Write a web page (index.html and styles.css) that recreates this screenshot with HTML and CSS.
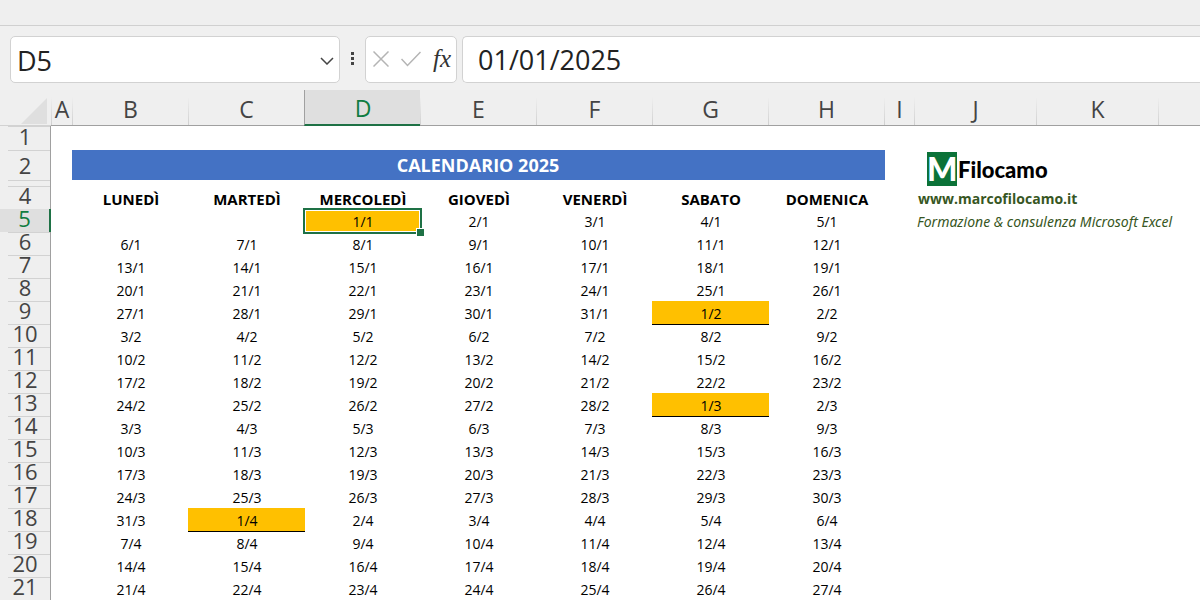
FILE: index.html
```html
<!DOCTYPE html>
<html lang="it">
<head>
<meta charset="utf-8">
<title>Calendario 2025</title>
<link rel="stylesheet" href="styles.css">
</head>
<body>
<div class="ribbon-edge"></div>
<div class="formula-bar">
  <div class="name-box">
    <input class="name-input" type="text" value="D5" aria-label="Casella nome">
    <button class="icon-btn" type="button" aria-label="Apri elenco nomi">
      <svg width="14" height="8" viewBox="0 0 14 8"><path d="M1 1l6 6 6-6" fill="none" stroke="#444" stroke-width="1.5"/></svg>
    </button>
  </div>
  <svg class="grip" width="4" height="14" viewBox="0 0 4 14"><path d="M0 0h3v3H0zM0 5h3v3H0zM0 10h3v3H0z" fill="#444"/></svg>
  <div class="actions">
    <button class="icon-btn" type="button" aria-label="Annulla">
      <svg width="16" height="16" viewBox="0 0 16 16"><path d="M.5.5l15 15M15.500.5l-15 15" fill="none" stroke="#b4b4b4" stroke-width="1.500"/></svg>
    </button>
    <button class="icon-btn" type="button" aria-label="Invio">
      <svg width="20" height="16" viewBox="0 0 20 16"><path d="M.5 8l6 6.500L19.500 1" fill="none" stroke="#b4b4b4" stroke-width="1.500"/></svg>
    </button>
    <button class="icon-btn fx" type="button" aria-label="Inserisci funzione">fx</button>
  </div>
  <input class="formula-input" type="text" value="01/01/2025" aria-label="Barra della formula">
</div>
<table class="sheet">
<colgroup><col class="c-head"><col class="c-a"><col class="c-day"><col class="c-day"><col class="c-day"><col class="c-day"><col class="c-day"><col class="c-day"><col class="c-day"><col class="c-i"><col class="c-wide"><col class="c-wide"><col></colgroup>
<thead>
<tr class="letters"><th class="corner"><svg width="26" height="26" viewBox="0 0 26 26"><path d="M26 0v26H0z" fill="#dfdfdf"/></svg></th><th>A</th><th>B</th><th>C</th><th class="active">D</th><th>E</th><th>F</th><th>G</th><th>H</th><th>I</th><th>J</th><th>K</th><th></th></tr>
</thead>
<tbody>
<tr class="r1"><th>1</th><td colspan="12"></td></tr>
<tr class="r2"><th>2</th><td></td><td class="title" colspan="7">CALENDARIO 2025</td><td></td><td class="brand" colspan="3" rowspan="2"><div class="logo"><span class="logo-m">M</span><span class="logo-name">Filocamo</span></div></td></tr>
<tr class="r3"><th></th><td colspan="9"></td></tr>
<tr class="days"><th>4</th><td></td><td>LUNEDÌ</td><td>MARTEDÌ</td><td>MERCOLEDÌ</td><td>GIOVEDÌ</td><td>VENERDÌ</td><td>SABATO</td><td>DOMENICA</td><td></td><td class="note" colspan="3"><a class="site" href="#">www.marcofilocamo.it</a></td></tr>
<tr><th class="active">5</th><td></td><td></td><td></td><td class="first selected">1/1</td><td>2/1</td><td>3/1</td><td>4/1</td><td>5/1</td><td></td><td class="note tagline" colspan="3">Formazione &amp; consulenza Microsoft Excel</td></tr>
<tr><th>6</th><td></td><td>6/1</td><td>7/1</td><td>8/1</td><td>9/1</td><td>10/1</td><td>11/1</td><td>12/1</td></tr>
<tr><th>7</th><td></td><td>13/1</td><td>14/1</td><td>15/1</td><td>16/1</td><td>17/1</td><td>18/1</td><td>19/1</td></tr>
<tr><th>8</th><td></td><td>20/1</td><td>21/1</td><td>22/1</td><td>23/1</td><td>24/1</td><td>25/1</td><td>26/1</td></tr>
<tr><th>9</th><td></td><td>27/1</td><td>28/1</td><td>29/1</td><td>30/1</td><td>31/1</td><td class="first">1/2</td><td>2/2</td></tr>
<tr><th>10</th><td></td><td>3/2</td><td>4/2</td><td>5/2</td><td>6/2</td><td>7/2</td><td>8/2</td><td>9/2</td></tr>
<tr><th>11</th><td></td><td>10/2</td><td>11/2</td><td>12/2</td><td>13/2</td><td>14/2</td><td>15/2</td><td>16/2</td></tr>
<tr><th>12</th><td></td><td>17/2</td><td>18/2</td><td>19/2</td><td>20/2</td><td>21/2</td><td>22/2</td><td>23/2</td></tr>
<tr><th>13</th><td></td><td>24/2</td><td>25/2</td><td>26/2</td><td>27/2</td><td>28/2</td><td class="first">1/3</td><td>2/3</td></tr>
<tr><th>14</th><td></td><td>3/3</td><td>4/3</td><td>5/3</td><td>6/3</td><td>7/3</td><td>8/3</td><td>9/3</td></tr>
<tr><th>15</th><td></td><td>10/3</td><td>11/3</td><td>12/3</td><td>13/3</td><td>14/3</td><td>15/3</td><td>16/3</td></tr>
<tr><th>16</th><td></td><td>17/3</td><td>18/3</td><td>19/3</td><td>20/3</td><td>21/3</td><td>22/3</td><td>23/3</td></tr>
<tr><th>17</th><td></td><td>24/3</td><td>25/3</td><td>26/3</td><td>27/3</td><td>28/3</td><td>29/3</td><td>30/3</td></tr>
<tr><th>18</th><td></td><td>31/3</td><td class="first">1/4</td><td>2/4</td><td>3/4</td><td>4/4</td><td>5/4</td><td>6/4</td></tr>
<tr><th>19</th><td></td><td>7/4</td><td>8/4</td><td>9/4</td><td>10/4</td><td>11/4</td><td>12/4</td><td>13/4</td></tr>
<tr><th>20</th><td></td><td>14/4</td><td>15/4</td><td>16/4</td><td>17/4</td><td>18/4</td><td>19/4</td><td>20/4</td></tr>
<tr><th>21</th><td></td><td>21/4</td><td>22/4</td><td>23/4</td><td>24/4</td><td>25/4</td><td>26/4</td><td>27/4</td></tr>
</tbody>
</table>
</body>
</html>
```
FILE: styles.css
```css
* { box-sizing: border-box; }
body {
  margin: 0;
  background: #efefef;
  color: #000;
  font-family: "Open Sans", "Noto Sans", sans-serif;
}
.ribbon-edge { height: 26px; border-bottom: 1px solid #d0d0d0; }

.formula-bar {
  display: flex;
  align-items: center;
  height: 64px;
  padding: 2px 0 0 10px;
  background: #f0f0f0;
}
.name-box, .actions, .formula-input {
  height: 47px;
  background: #fff;
  border: 1px solid #d2d2d2;
  border-radius: 5px;
}
.name-box { display: flex; align-items: center; width: 330px; padding-right: 4px; }
.name-input, .formula-input { font: 27px "Open Sans", sans-serif; color: #222; outline: 0; }
.name-input { flex: 1; min-width: 0; height: 45px; border: 0; padding: 2px 0 0 6px; background: none; }
.icon-btn { display: flex; padding: 0; border: 0; background: none; }
.name-box .icon-btn { padding: 4px 1px 0; }
.grip { margin: 0 10px 0 11px; }
.actions { display: flex; align-items: center; justify-content: space-between; width: 92px; margin-right: 5px; padding: 0 5px 0 7px; }
.fx { font: italic 25px "Liberation Serif", serif; color: #333; }
.formula-input { flex: 1; min-width: 0; padding: 0 0 0 15px; border-right: 0; border-radius: 5px 0 0 5px; }

.sheet {
  width: 100%;
  table-layout: fixed;
  border-collapse: separate;
  border-spacing: 0;
  background: #fff;
  font-size: 14px;
  line-height: 20px;
}
.c-head { width: 51px; }
.c-a { width: 21px; }
.c-day { width: 116px; }
.c-i { width: 30px; }
.c-wide { width: 122px; }
.sheet th, .sheet td { height: 23px; padding: 0; text-align: center; white-space: nowrap; }
.sheet td { padding-left: 2px; padding-top: 3px; }
.sheet th {
  background: linear-gradient(to right, #efefef 8px, #d2d2d2 8px) top / 100% 1px no-repeat #efefef;
  border-right: 1px solid #a0a0a0;
  color: #444;
  font-size: 22px;
  font-weight: 400;
  line-height: 18px;
  padding-bottom: 5px;
}
.sheet .letters th {
  height: 36px;
  padding: 2px 0 0 1px;
  border-right: 0;
  border-bottom: 1px solid #a0a0a0;
  background: linear-gradient(#efefef, #d0d0d0) left bottom / 1px 28px no-repeat #efefef;
  font-size: 23px;
}
.sheet .letters .corner { padding: 6px 4px 0 0; text-align: right; border-color: #d2d2d2; background: #efefef; }
.corner svg { display: block; margin-left: auto; }
.sheet .letters .active {
  background: #dfdfdf;
  border-left: 1px solid #a0a0a0;
  border-bottom: 2px solid #1e7145;
  color: #107c41;
}
.sheet tbody .active { background: #dfdfdf; border-right: 2px solid #1e7145; color: #107c41; }
.sheet .r1 th { height: 24px; }
.sheet .r2 th { height: 30px; padding-bottom: 1px; }
.sheet .r3 th, .sheet .r3 td { height: 6px; padding: 0; line-height: 0; }
.sheet .title {
  background: #4472c4;
  box-shadow: 1px 0 #4472c4;
  color: #fff;
  font-size: 18px;
  font-weight: 700;
  padding: 0;
}
.sheet .days td { font-size: 15px; font-weight: 700; }
.sheet .first { background: #ffc000; box-shadow: 1px 0 #ffc000, 0 1px #000, 1px 1px #000; }
.sheet .selected { position: relative; box-shadow: none; }
.selected::before {
  content: "";
  position: absolute;
  inset: -1px -2px -2px -1px;
  border: 2px solid #1e7145;
  box-shadow: inset 0 0 0 1px #fff;
}
.selected::after {
  content: "";
  position: absolute;
  right: -4px;
  bottom: -4px;
  width: 7px;
  height: 7px;
  background: #1e7145;
  border: solid #fff;
  border-width: 1px 0 0 1px;
}
.sheet .brand { padding: 2px 0 0 13px; vertical-align: top; }
.logo { display: flex; align-items: center; font-family: Lato, sans-serif; font-weight: 900; }
.logo-m { width: 30px; height: 34px; background: #0b7238; color: #fff; font-size: 32px; line-height: 34px; text-align: center; }
.logo-name { padding: 2px 0 0 1px; font-size: 22px; }
.sheet .days .note { font-size: 14px; }
.sheet .note { padding-left: 4px; text-align: left; }
.site { color: #375623; text-decoration: none; }
.sheet .tagline { padding-left: 3px; color: #375623; font-family: "Noto Sans", sans-serif; font-style: italic; }
```
